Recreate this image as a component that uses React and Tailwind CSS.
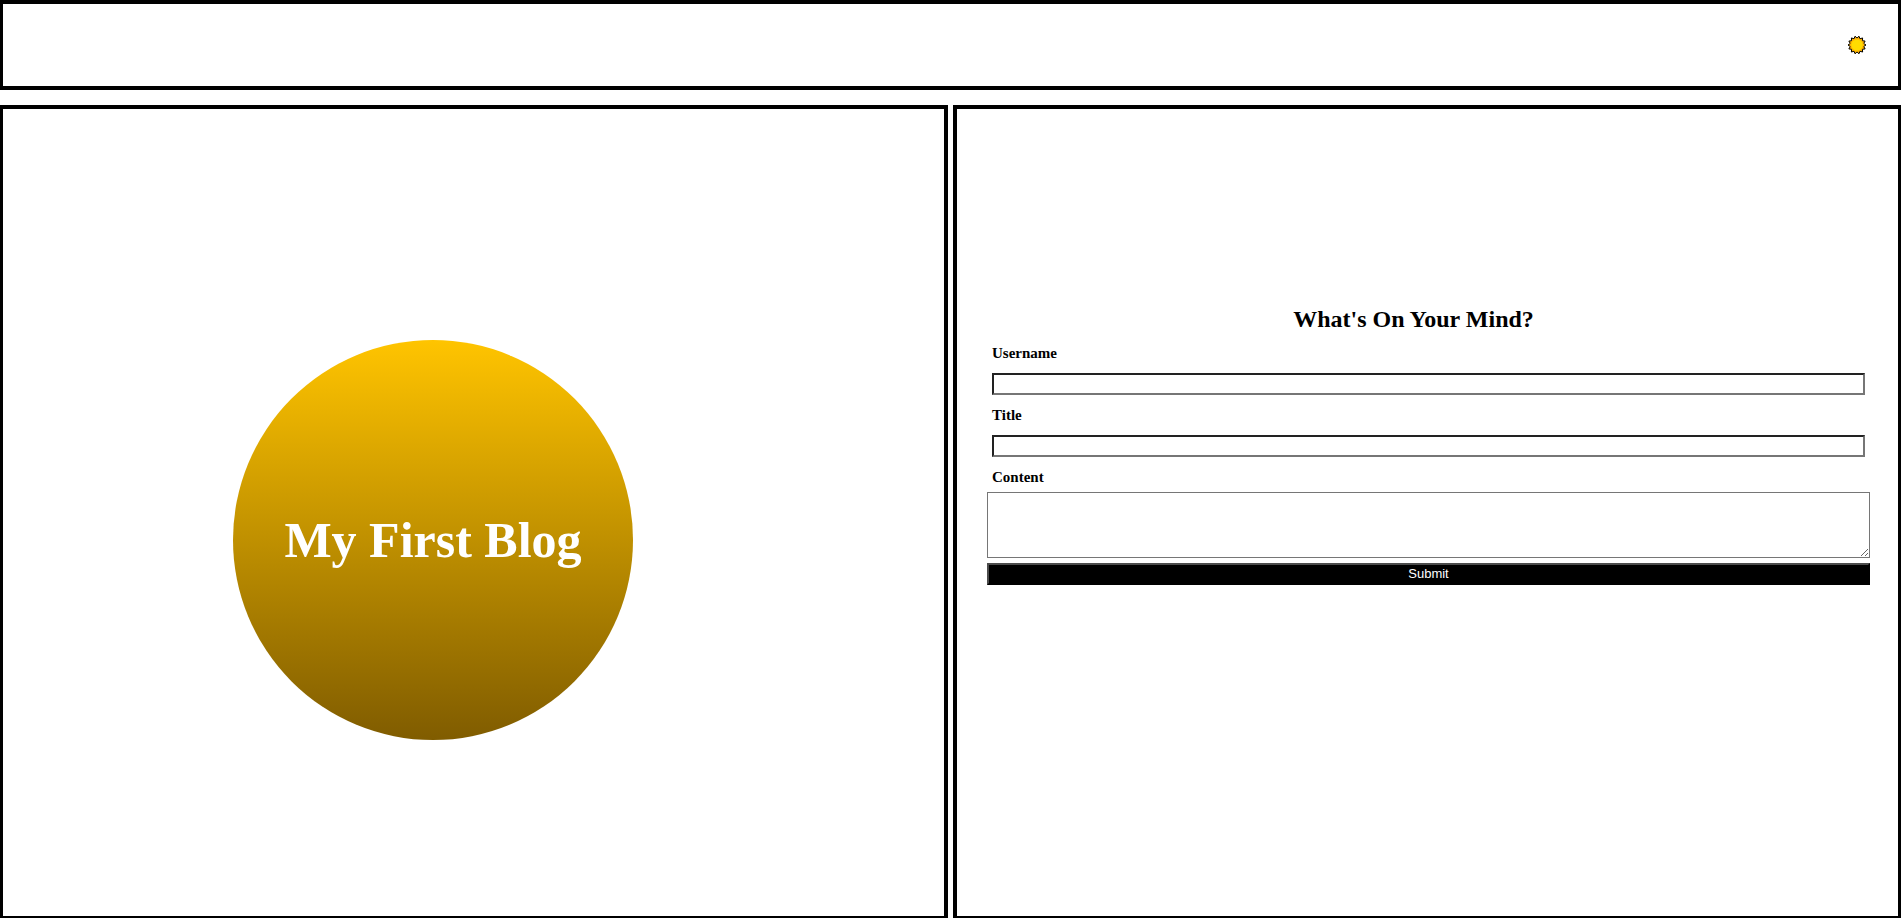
import React from "react";

const RAY_COUNT = 14;
const sunPoints = Array.from({ length: RAY_COUNT * 2 }, (_, i) => {
  const angle = (i * Math.PI) / RAY_COUNT - Math.PI / 2;
  const radius = i % 2 === 1 ? 9 : 6.9;
  return `${(9 + radius * Math.cos(angle)).toFixed(2)},${(9 + radius * Math.sin(angle)).toFixed(2)}`;
}).join(" ");

function SunIcon() {
  return (
    <svg width="18" height="18" viewBox="0 0 18 18" className="overflow-visible" aria-hidden="true">
      <polygon points={sunPoints} fill="#ffb000" stroke="#000" strokeWidth="1" />
      <circle cx="9" cy="9" r="6.5" fill="#ffb800" />
      <circle cx="9" cy="9" r="5.6" fill="#ffdc00" />
    </svg>
  );
}

function Field({ id, label }) {
  return (
    <>
      <label htmlFor={id} className="mx-[5px] block text-[15px] font-bold leading-5">
        {label}
      </label>
      <div className="px-[5px] pt-[10px] pb-[10px]">
        <input
          id={id}
          name={id}
          type="text"
          className="block h-[22px] w-full border-2 border-t-[#222222] border-l-[#222222] border-r-[#767676] border-b-[#767676] bg-white px-0.5 font-['Liberation_Sans',Arial,sans-serif] text-[13px]"
        />
      </div>
    </>
  );
}

export default function App() {
  return (
    <div className="flex min-h-screen flex-col gap-[15px] bg-white font-['Liberation_Serif','Times_New_Roman',serif] text-black">
      <header className="flex h-[90px] items-center justify-end border-x-[3px] border-y-4 border-black pr-8">
        <button type="button" aria-label="Toggle theme" className="block">
          <SunIcon />
        </button>
      </header>

      <main className="grid flex-1 grid-cols-2 gap-[5px]">
        <section className="border-t-4 border-r-4 border-b-2 border-l-[3px] border-black pt-[231px] pl-[230px]">
          <div className="flex size-[400px] items-center justify-center rounded-full bg-[linear-gradient(to_bottom,#ffc400,#805c00)]">
            <h1 className="text-[50px] font-bold leading-none whitespace-nowrap text-white">My First Blog</h1>
          </div>
        </section>

        <section className="border-t-4 border-r-[3px] border-b-2 border-l-4 border-black pt-[196px] pr-7">
          <h2 className="text-center text-2xl font-bold leading-7">What's On Your Mind?</h2>
          <form className="pt-[10px] pl-[30px]" onSubmit={(event) => event.preventDefault()}>
            <Field id="username" label="Username" />
            <Field id="title" label="Title" />
            <label htmlFor="content" className="mx-[5px] block text-[15px] font-bold leading-5">
              Content
            </label>
            <textarea
              id="content"
              name="content"
              className="mt-[5px] block h-[66px] w-full resize border border-[#767676] bg-white p-0.5 font-['Liberation_Sans',Arial,sans-serif] text-[13px]"
            />
            <button
              type="submit"
              className="mt-[5px] block h-[22px] w-full border-2 border-t-[#4c4c4c] border-l-[#4c4c4c] border-r-black border-b-black bg-black font-['Liberation_Sans',Arial,sans-serif] text-[13px] leading-4 text-white"
            >
              Submit
            </button>
          </form>
        </section>
      </main>
    </div>
  );
}
